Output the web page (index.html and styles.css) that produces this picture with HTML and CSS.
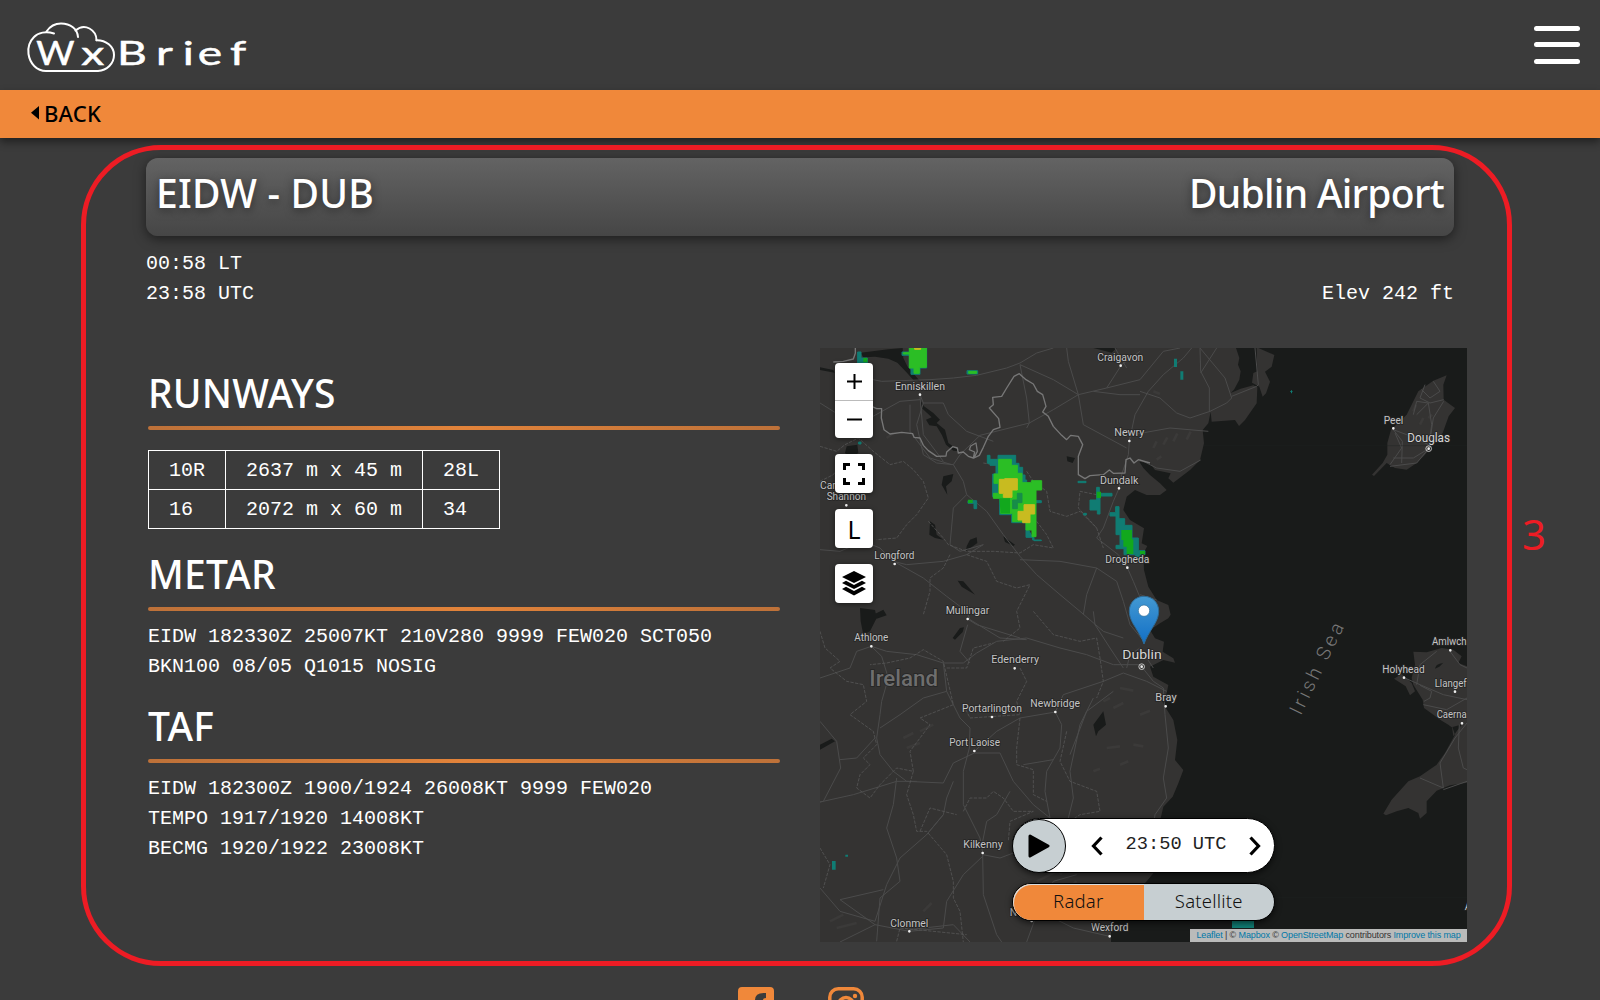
FILE: index.html
```html
<!DOCTYPE html>
<html lang="en">
<head>
<meta charset="utf-8">
<title>WxBrief - EIDW</title>
<link rel="stylesheet" href="styles.css">
</head>
<body>
<header class="topbar">
  <svg class="logo" width="230" height="54" viewBox="0 0 230 54" aria-label="WxBrief">
    <g fill="none" stroke="#fff" stroke-width="2" stroke-linecap="round">
      <path d="M28 11.500C20 9 12 10.500 8 15C3 20 1.800 27 2.500 32C4 42 11 49 20 49H72C81 48.500 88 41.500 88 33C88 24.500 80 18 70.500 18.200"/>
      <path d="M20.500 9.500C24.500 3.500 30 1.500 35 1.500C44.500 1.500 51.500 7 52 15"/>
      <path d="M49.500 8.500C53.500 5 59 4 63.500 6.500C68 9 70.500 13.500 70.500 18.200"/>
    </g>
    <g class="logo-text">
      <g transform="scale(1.120 1)"><text x="9.200" y="43.500">W</text></g>
      <g transform="scale(1.400 1)"><text x="39.500 65 92.800 112 122.600 145.800" y="43.500">xBrief</text></g>
    </g>
  </svg>
  <button class="menu" aria-label="Menu"><span></span><span></span><span></span></button>
</header>
<nav class="backbar"><svg width="8" height="14" viewBox="0 0 8 14"><path d="M8 0V13.500L0 6.800Z"/></svg><a>BACK</a></nav>

<main class="page">
  <section class="airport">
    <h1>EIDW - DUB</h1>
    <h1 class="airport-name">Dublin Airport</h1>
  </section>
  <section class="info mono">
    <div>00:58 LT<br>23:58 UTC</div>
    <div>Elev 242 ft</div>
  </section>
  <div class="columns">
    <div class="reports mono">
      <h2>RUNWAYS</h2>
      <hr>
      <table>
        <tr><td>10R</td><td>2637 m x 45 m</td><td>28L</td></tr>
        <tr><td>16</td><td>2072 m x 60 m</td><td>34</td></tr>
      </table>
      <h2>METAR</h2>
      <hr>
      <p>EIDW 182330Z 25007KT 210V280 9999 FEW020 SCT050<br>BKN100 08/05 Q1015 NOSIG</p>
      <h2>TAF</h2>
      <hr>
      <p>EIDW 182300Z 1900/1924 26008KT 9999 FEW020<br>TEMPO 1917/1920 14008KT<br>BECMG 1920/1922 23008KT</p>
    </div>
    <div class="map">
      <svg class="tiles" width="647" height="594" viewBox="0 0 1941 1782">
        <rect width="1941" height="1782" fill="#343332"/>
        <path class="sea" d="M1315 0L1363 21L1355 56L1335 71L1350 101L1338 136L1328 146L1318 116L1296 104L1300 75L1312 70L1310 0H1248L1258 30L1254 50L1262 70L1258 95L1242 125L1232 135L1262 122L1300 112L1312 118L1310 166L1275 216L1257 234L1245 216L1175 221L1172 191L1165 226L1148 246L1152 286L1140 336L1110 366L1060 404L1045 391L1052 376L1005 366L990 346L958 341L970 360L990 381L1020 406L1040 426L1020 441L980 441L945 426L920 446L910 486L930 516L972 541L965 586L982 594L970 616L972 666L985 716L1010 756L1045 771L1052 800L1045 811L1020 826L990 846L1005 871L1032 881L1028 911L1060 931L1065 944L1030 936L990 956L1000 986L1045 1011L1040 1036L1025 1056L1035 1076L1060 1116L1072 1176L1065 1236L1090 1266L1075 1306L1058 1346L1030 1376L1020 1420L1010 1500L1000 1576L980 1600L900 1690L873 1716V1782H1941V0Z"/>
        <!-- Isle of Man -->
        <path class="land" d="M1880 82L1870 110L1871 155L1905 180L1886 205L1868 255L1815 320L1790 345L1760 365L1725 360L1700 345L1662 384L1656 380L1688 345L1702 320L1702 285L1713 245L1760 200L1795 130L1840 98Z"/>
        <!-- Anglesey and Llyn -->
        <path class="land" d="M1780 911L1820 913L1865 900L1900 905L1925 925L1915 945L1941 955V1125L1895 1138L1885 1130L1865 1118L1812 1080L1808 1055L1780 1010L1775 990L1785 950Z"/>
        <path class="land" d="M1722 992L1745 978L1775 1005L1785 1030L1770 1042L1757 1015Z"/>
        <path class="land" d="M1895 1130L1900 1165L1910 1150L1941 1110V1304L1890 1312L1850 1328L1820 1360L1820 1395L1800 1412L1795 1395L1765 1380L1730 1390L1698 1402L1690 1397L1715 1355L1765 1300L1800 1285L1850 1250L1875 1215L1905 1160Z"/>
        <path class="sea" d="M1845 962C1850 945 1860 948 1870 944L1858 956Z"/>
        <!-- lakes -->
        <path class="sea" d="M122 14L205 4L248 0L250 30L262 55L300 100L282 98L262 76L232 44L205 32L165 26L130 28Z"/>
        <path class="sea" d="M300 155L312 175L340 195L360 215L350 225L375 245L385 285L420 310L400 308L378 290L366 262L350 235L328 232L318 215L335 208L305 180Z"/>
        <path class="sea" d="M80 295L112 290L115 315L90 330L75 315ZM370 385L400 378L395 400L378 415L382 440L365 410ZM330 520L345 530L350 560L370 575L345 570L328 560ZM440 595L450 575L470 568L472 585L438 610ZM413 698L430 700L465 740L425 716ZM398 870L420 840L432 838L428 852L405 875ZM120 780L165 786L170 810L150 850L130 860L122 820ZM160 800L190 785L200 802L170 812ZM0 1190L35 1172L45 1180L0 1205ZM820 1130L850 1090L858 1130L835 1150L828 1165ZM740 325L765 330L758 345L742 340ZM550 565L585 590L580 594L555 582ZM0 58L40 66L44 74L0 66ZM820 0H890L875 14Z"/>
        <path class="hills" d="M850 1060l20-10M880 1080l30-15M860 1200l40-5M900 1250l25-10M940 1190l30 5M960 1100l30-12M820 1270l20-8M900 1020l40 8M250 1170l30-15M300 1150l40-20M260 1200l40-15M310 1690l25-25M30 1720l40-20M50 1740l60-15M650 1600l60-30M720 1580l30-40M700 1660l70-60M1000 300l10-20M1030 290l12-22M1060 280l12-24M1100 275l12-24M1010 335l14-10M1780 190l8-20M1800 230l10-20M1825 210l12-10M1000 130l20 8M200 270l20-15M80 200l16-10"/>
        <g class="roads">
          <path d="M55 75L185 100L330 95L400 90L470 82L560 60L600 45L650 15L700 0M600 50L700 95L775 140L860 120L960 95L1030 10L1080 0M740 0L745 40L775 140L790 230L920 300M775 140L700 185L628 225L620 240M628 225L620 150L600 50M628 225L480 262L420 320L400 350"/>
          <path d="M300 140L310 165L370 165L385 200L440 250L520 280M300 155L240 160L150 210L80 215L0 165M310 165L290 230L310 320L350 345L400 350L430 400L440 440L500 490L550 560L600 625L650 680L720 740L780 790L850 850L910 870"/>
          <path d="M440 440L400 480L390 590L420 610L490 590L440 620L370 640L260 650L220 640L180 600L130 580L60 610L0 605M395 350L330 330L270 250L270 170M300 145L310 260L370 340M230 645L310 690L380 745L440 790L450 815L540 870L620 875"/>
          <path d="M928 279L945 200L985 130L1030 80L1090 30L1115 0M928 279L925 320L905 380L897 421L880 460L850 540L830 570L895 620L922 659L940 700L965 760L975 870M960 130L1020 150L1070 195L1110 210L1170 190L1220 165L1235 150L1215 90L1140 0M1140 0L1142 70L1168 120L1168 190M1235 145L1310 115L1315 110L1305 0M1190 0L1142 75M1165 250L1050 240L928 262M860 120L905 50L960 10M820 130L900 140L960 140M1142 336L1080 370L1010 360L960 335"/>
          <path d="M154 895L200 910L290 920L370 945L430 945L470 915L530 880L620 870L720 900L800 920L880 950L960 950M154 895L110 910L90 960L0 990M443 813L470 830L600 870M443 830L420 910L450 945M370 945L380 1030L420 1110L450 1140L448 1200L430 1270L430 1370L480 1470L488 1515M154 895L185 925L205 990L185 1060L180 1100L170 1170L180 1220L220 1270L260 1300L370 1305L400 1245L463 1215L540 1215L580 1300L640 1370L690 1410"/>
          <path d="M180 1140L240 1100L310 1050L380 1030M60 1235L110 1230L165 1170M0 1120L50 1180L62 1260L10 1360L0 1362M0 1362L100 1340L230 1300L290 1300M230 1290L220 1370L200 1440L230 1530L240 1600L180 1650L170 1780M463 1210L530 1150L600 1110L706 1092L730 1040L850 1000L910 975M706 1092L725 1130L720 1200L680 1270L675 1330L690 1410M610 1250L700 1235M820 1050L780 1130L750 1270L760 1350L740 1430M880 1030L800 1090L750 1220"/>
          <path d="M370 1400L320 1460L240 1530L200 1610L165 1720L60 1690L0 1620M488 1520L490 1640L530 1760L545 1782M488 1525L430 1580L380 1660L370 1740L268 1750L165 1730L60 1655L190 1625M488 1520L540 1530L620 1500M570 1330L530 1400L500 1420L488 1480M400 1300L380 1350L370 1400L320 1460M268 1745L400 1730L450 1782M635 1719L700 1710L760 1740L869 1765M165 1730L60 1782M620 1782L650 1700L700 1600L770 1580"/>
          <path d="M885 0L920 60M972 880L930 830L910 760L890 700L830 660L720 640L600 635M830 660L800 740L790 800M960 950L1000 1000L1030 1020L1035 1100L1045 1200L1030 1290L1040 1350L1005 1400L990 1500M920 960L930 920L960 900L1000 960M910 975L980 1000L1040 1030M820 790L825 830L870 900L910 960M1010 756L960 740"/>
          <path d="M1815 110L1800 150L1830 165L1871 155M1790 200L1825 165L1835 230L1826 302M1871 160L1840 210L1826 302L1790 345L1710 355M1720 245L1760 260L1826 290M1725 255L1745 300L1710 350M1745 345L1747 280L1720 245M1840 100L1860 130L1830 150L1805 125M1720 330L1780 330L1826 302M1825 165L1790 160L1780 200"/>
          <path d="M1752 989L1800 1010L1870 1040L1941 1055M1790 1010L1800 950L1850 910M1800 1012L1835 1030L1830 1050L1812 1060M1810 1070L1880 1085L1941 1050M1941 1125L1905 1170L1860 1245L1870 1320L1800 1290M1870 1325L1941 1300M1918 1130L1915 1200L1930 1260L1941 1265M1890 910L1920 950L1941 960"/>
        </g>
        <g class="county">
          <path d="M0 295L50 310L75 290L115 270L160 310L210 350L250 340L280 365L310 400L325 450L290 500L260 530L230 570L170 575M325 520L370 570L385 590L440 610L520 610L600 615L640 590L700 600L680 560L650 520M0 400L40 380L60 350L95 330M490 345L520 350M620 370L640 400L680 430L690 490L740 505L780 490L830 540M390 620L370 660L330 690L330 730L310 800M440 620L500 640L530 700L590 720L630 710L590 790L600 840L550 880"/>
          <path d="M0 850L15 900L60 940L30 960L80 1000L130 1010L140 1060L90 1100L160 1150L170 1190L130 1230L150 1250L120 1280L110 1320L150 1350L180 1310L230 1260L280 1270L270 1210L330 1130L300 1110L400 1070L370 940L310 905L270 930L200 945L150 950M380 960L440 960L460 900L520 885M600 960L620 1000L590 1060L600 1100L450 1110L430 1070M600 1110L590 1200L590 1250L640 1265L640 1340L680 1360M280 1270L260 1340L280 1400L290 1450L320 1450L380 1520L400 1600L400 1650L420 1690L430 1782M430 1390L450 1350L500 1350L520 1330L550 1350L580 1390L640 1390L570 1420L565 1480M640 790L700 860L780 880L830 870L840 930L850 1000L830 1050M740 1150L720 1240L750 1300L830 1330L840 1390L780 1400L720 1440M0 1500L30 1550L10 1620M300 1450L330 1380L410 1400M830 440L780 430L775 480L830 540L850 600M230 1780L240 1740L440 1760"/>
        </g>
        <path class="border" d="M40 42L70 40L100 33L106 16V0M155 175L170 182L185 182L184 210L192 245L210 258L245 253L278 257L282 268L300 270L310 292L325 308L350 325L378 324L380 312L398 296L412 300L415 315L430 312L445 325L460 330L464 312L448 305L452 294L468 285L472 310L462 330L478 322L490 298L505 265L520 245L540 238L536 212L508 180L520 170L518 148L545 145L560 120L582 85L598 77L618 95L640 108L652 130L668 140L678 175L668 192L685 205L700 235L725 262L740 275L752 262L775 265L788 290L775 325L775 380L795 392L810 383L850 380L868 366L880 376L915 375L918 335L930 330L942 345L955 335L990 345"/>
        <g class="tile-seam"><path d="M1152 293H1941M1300 1648H1941"/></g>
        <!-- radar returns -->
        <g transform="translate(-30 -24)" stroke-width="3" stroke-linejoin="round">
          <path fill="#107c73" stroke="#107c73" d="M532 346H540V358H564V346H617V370H627V382H638V405H645V420H650V560L668 592V600H694V602H672V592H648V548H605V524H569V470H548V402H558V376H540V370H532ZM490 482H500V506H492V490H474V482ZM143 36H153V54H172V69H143ZM276 36H298V24H350V84H330V103H303V84H298V46H276ZM471 92H503V102H471ZM804 424H828V428H804ZM860 442H868V460H906V468H870V522H862V510H840V480H860ZM821 520H829V525H821ZM917 500H927V536H944V556H966V594H985V632H1005V644H988V660H976V644H942V626H918V616H930V584H918V528H900V518H917ZM670 482H694V488H670ZM146 306H153V312H146Z"/>
          <path fill="#2bbe25" stroke="#2bbe25" d="M566 358H604V376H622V400H636V428H664V422H695V450H678V590H666V570H648V545H608V520H572V475H550V460H566V430H552V402H566ZM298 24H349V82H328V100H312V84H298V42H280V38H298ZM476 94H500V100H476Z"/>
          <path fill="#12a81d" d="M568 475H600V520H572ZM940 570H966V598H970V642H950V620H940V600H934V570ZM860 455H873V474H860ZM474 479H488V489H474ZM160 54H172V67H160ZM990 633H1005V643H990Z"/>
          <path fill="#178d49" stroke="#178d49" d="M622 460H636V488H622V506H608V480H622Z"/>
          <path fill="#c8bb20" stroke="#c8bb20" d="M568 418H584V416H622V450H606V472H580V460H568ZM642 494H674V522H660V548H638V540H624V514H642ZM314 24H332V28H314Z"/>
        </g>
        <path fill="#107c73" d="M1062 32h9v25h-9zM1081 70h9v25h-9zM1410 130h8v2h-8zM1413 127h3v9h-3zM36 1539h11v26h-11zM76 1520h8v6h-8zM1236 1715h66v25h-66z"/>
        <g class="places">
          <text x="832" y="38" textLength="138" lengthAdjust="spacingAndGlyphs">Craigavon</text>
          <text x="225" y="127" textLength="150" lengthAdjust="spacingAndGlyphs">Enniskillen</text>
          <text x="883" y="264" textLength="90" lengthAdjust="spacingAndGlyphs">Newry</text>
          <text x="840" y="407" textLength="115" lengthAdjust="spacingAndGlyphs">Dundalk</text>
          <text x="0" y="422">Car</text>
          <text x="20" y="457" textLength="118" lengthAdjust="spacingAndGlyphs">Shannon</text>
          <text x="163" y="633" textLength="120" lengthAdjust="spacingAndGlyphs">Longford</text>
          <text x="856" y="644" textLength="132" lengthAdjust="spacingAndGlyphs">Drogheda</text>
          <text x="377" y="798" textLength="131" lengthAdjust="spacingAndGlyphs">Mullingar</text>
          <text x="103" y="880" textLength="102" lengthAdjust="spacingAndGlyphs">Athlone</text>
          <text x="514" y="946" textLength="143" lengthAdjust="spacingAndGlyphs">Edenderry</text>
          <text x="426" y="1092" textLength="180" lengthAdjust="spacingAndGlyphs">Portarlington</text>
          <text x="631" y="1078" textLength="149" lengthAdjust="spacingAndGlyphs">Newbridge</text>
          <text x="388" y="1195" textLength="152" lengthAdjust="spacingAndGlyphs">Port Laoise</text>
          <text x="430" y="1501" textLength="118" lengthAdjust="spacingAndGlyphs">Kilkenny</text>
          <text x="211" y="1736" textLength="114" lengthAdjust="spacingAndGlyphs">Clonmel</text>
          <text x="813" y="1750" textLength="112" lengthAdjust="spacingAndGlyphs">Wexford</text>
          <text x="569" y="1703">N</text>
          <text x="1006" y="1060" textLength="64" lengthAdjust="spacingAndGlyphs">Bray</text>
          <text x="1836" y="892" textLength="104" lengthAdjust="spacingAndGlyphs">Amlwch</text>
          <text x="1687" y="974" textLength="127" lengthAdjust="spacingAndGlyphs">Holyhead</text>
          <text x="1844" y="1016" textLength="96" lengthAdjust="spacingAndGlyphs">Llangef</text>
          <text x="1850" y="1110" textLength="90" lengthAdjust="spacingAndGlyphs">Caerna</text>
          <text x="1934" y="1686">A</text>
          <text x="1691" y="227" textLength="59" lengthAdjust="spacingAndGlyphs">Peel</text>
          <text class="city" x="1762" y="282" textLength="128" lengthAdjust="spacingAndGlyphs">Douglas</text>
          <text class="city" x="907" y="933" textLength="118" lengthAdjust="spacingAndGlyphs">Dublin</text>
          <text class="country" x="148" y="1014" textLength="206" lengthAdjust="spacingAndGlyphs">Ireland</text>
          <text class="water" transform="translate(1442 1104) rotate(-64)" x="0" y="0" textLength="298">Irish Sea</text>
        </g>
        <path class="dots" d="M902 53h0M300 140h0M928 279h0M897 421h0M79 472h0M224 648h0M922 659h0M443 813h0M154 895h0M584 961h0M516 1107h0M706 1092h0M463 1209h0M488 1515h0M268 1750h0M869 1765h0M965 956h0M1037 1075h0M1891 907h0M1752 989h0M1905 1031h0M1926 1126h0M1720 241h0M1826 302h0M635 1719h0"/>
        <g fill="none" stroke="#ddd" stroke-width="2.500"><circle cx="965" cy="956" r="8.500"/><circle cx="1826" cy="302" r="8.500"/></g>
        <defs><linearGradient id="pin" x1="0" y1="0" x2="0" y2="1"><stop offset="0" stop-color="#4399d2"/><stop offset="1" stop-color="#126fc6"/></linearGradient></defs>
        <path d="M972 745C946 745 928 765 928 789C928 808 936 822 946 838C956 855 966 870 972 888C978 870 988 855 998 838C1008 822 1016 808 1016 789C1016 765 998 745 972 745Z" fill="url(#pin)" stroke="#2e6c97" stroke-width="3"/>
        <circle cx="972" cy="788" r="17" fill="#fff" stroke="#2e6c97" stroke-width="2"/>
      </svg>
      <div class="controls">
        <div class="zoom">
          <button><svg width="15" height="15" viewBox="0 0 15 15"><path d="M7.500 0V15M0 7.500H15" stroke="#000" stroke-width="2"/></svg></button>
          <button><svg width="15" height="15" viewBox="0 0 15 15"><path d="M0 7.500H15" stroke="#000" stroke-width="2"/></svg></button>
        </div>
        <button class="ctl"><svg width="22" height="22" viewBox="0 0 22 22"><path d="M1.500 7V1.500H7M15 1.500H20.500V7M20.500 15V20.500H15M7 20.500H1.500V15" fill="none" stroke="#000" stroke-width="3"/></svg></button>
        <button class="ctl letter">L</button>
        <button class="ctl"><svg width="26" height="25" viewBox="0 0 26 25"><path d="M13 0L25 6L13 12L1 6ZM5 9.800L13 14L21 9.800L25 12L13 18L1 12ZM5 15.800L13 20L21 15.800L25 18L13 24.500L1 18Z"/></svg></button>
      </div>
      <div class="player">
        <div class="timebar">
          <button class="play"><svg width="22" height="24" viewBox="0 0 22 24"><path d="M2 2L20 12L2 22Z" stroke="#000" stroke-width="3" stroke-linejoin="round"/></svg></button>
          <div class="stepper">
            <svg width="12" height="20" viewBox="0 0 12 20"><path d="M10.500 1.500L2.500 10L10.500 18.500" fill="none" stroke="#000" stroke-width="3.200"/></svg>
            <span class="mono">23:50 UTC</span>
            <svg width="12" height="20" viewBox="0 0 12 20"><path d="M1.500 1.500L9.500 10L1.500 18.500" fill="none" stroke="#000" stroke-width="3.200"/></svg>
          </div>
        </div>
        <div class="layers"><button class="active">Radar</button><button>Satellite</button></div>
      </div>
      <div class="credit"><a>Leaflet</a> | © <a>Mapbox</a> © <a>OpenStreetMap</a> contributors <a>Improve this map</a></div>
    </div>
  </div>
</main>
<footer class="social">
  <svg width="36" height="36" viewBox="0 0 36 36"><path fill="#f0883a" d="M4 0H32Q36 0 36 4V32Q36 36 32 36H25V22H30V16H25V13Q25 11 28 11V6Q17 5 17 13V16H13V22H17V36H4Q0 36 0 32V4Q0 0 4 0Z"/></svg>
  <svg width="36" height="36" viewBox="0 0 36 36" fill="none" stroke="#f0883a" stroke-width="3.500"><rect x="1.800" y="1.800" width="32.400" height="32.400" rx="8.500"/><circle cx="18" cy="18" r="7.500"/><circle cx="27" cy="9" r="2.200" fill="#f0883a" stroke="none"/></svg>
</footer>
<div class="outline"></div>
<div class="outline-number">3</div>
</body>
</html>
```
FILE: styles.css
```css
* { box-sizing: border-box; }
html, body { height: 100%; }
body {
  margin: 0;
  height: 1000px;
  overflow: hidden;
  position: relative;
  background: #3b3b3b;
  color: #fff;
  font-family: "Noto Sans", sans-serif;
}
button { border: 0; padding: 0; background: none; font: inherit; color: #000; }
.mono { font-family: "Liberation Mono", monospace; font-size: 20px; line-height: 30px; }

.topbar { height: 90px; display: flex; justify-content: space-between; padding: 22px 20px 0 26px; }
.logo { overflow: visible; }
.logo-text { font-family: "Lato", sans-serif; font-size: 33px; fill: #fff; stroke: #fff; stroke-width: 0.500; }
.menu { width: 46px; height: 38px; margin-top: 4px; display: flex; flex-direction: column; gap: 11px; }
.menu span { width: 46px; height: 5px; border-radius: 3px; background: #fff; }
.menu span:last-child { margin-top: 1px; }

.backbar {
  height: 48px;
  display: flex;
  align-items: center;
  gap: 5px;
  padding: 0 0 2px 31px;
  background: #f0883a;
  box-shadow: 0 4px 8px rgba(0, 0, 0, 0.450);
  color: #000;
  font-size: 22px;
  font-weight: 500;
  letter-spacing: 0.200px;
}

.page { padding: 20px 133px 0 146px; }
.airport {
  width: 1308px;
  height: 78px;
  padding: 0 10px;
  display: flex;
  justify-content: space-between;
  border-radius: 12px;
  background: linear-gradient(#636363, #464646);
  box-shadow: 0 3px 12px rgba(0, 0, 0, 0.500);
}
h1, h2 { margin: 0; font-family: "Noto Sans", sans-serif; font-size: 39px; font-weight: 550; line-height: 50px; letter-spacing: 0.200px; }
h1 { line-height: 69px; text-shadow: 0 2px 10px rgba(0, 0, 0, 0.500); }
.airport-name { letter-spacing: -0.700px; }
.info { width: 1308px; height: 112px; padding: 13px 0 0; display: flex; justify-content: space-between; }
.info div:last-child { padding-top: 30px; }

.columns { display: flex; justify-content: space-between; }
.reports { width: 634px; padding: 20px 0 0 2px; }
.reports h2 { height: 50px; }
.reports hr { height: 4px; margin: 8px 0; border: 0; border-radius: 2px; background: linear-gradient(90deg, #bd7139, #e2833a 50%, #bd7139); }
.reports p { margin: 0 0 19px; padding-top: 3px; }
.reports table { margin: 20px 0 20px; border-collapse: collapse; }
.reports td { height: 39px; padding: 2px 20px 0; border: 1px solid #fff; line-height: 30px; }

.map { position: relative; width: 647px; height: 594px; overflow: hidden; background: #343332; }
.tiles { display: block; }
.sea { fill: #191b1a; }
.land { fill: #343332; }
.roads, .county, .border, .hills, .tile-seam { fill: none; stroke-linejoin: round; }
.roads { stroke: #4b4b4b; stroke-width: 3; }
.county { stroke: #555; stroke-width: 2.500; stroke-dasharray: 10 4; }
.border { stroke: #777; stroke-width: 4; }
.hills { stroke: #3b3a39; stroke-width: 8; }
.tile-seam { stroke: #222423; stroke-width: 2; opacity: 0.600; }
.places { font-family: "Roboto", sans-serif; font-size: 31px; fill: #c4c4c4; stroke: #252525; stroke-width: 5; paint-order: stroke; }
.places .city { font-size: 37px; fill: #d5d5d5; }
.places .country { font-size: 65px; font-weight: 500; fill: #6e6e6e; }
.places .water { font-size: 58px; font-weight: 300; fill: #777; stroke: none; }
.dots { stroke: #eee; stroke-width: 8; stroke-linecap: round; }

.controls { position: absolute; left: 15px; top: 15px; display: flex; flex-direction: column; gap: 16px; }
.controls button { width: 38px; display: flex; align-items: center; justify-content: center; background: #fff; }
.zoom { border-radius: 4px; overflow: hidden; box-shadow: 0 1px 5px rgba(0, 0, 0, 0.500); }
.zoom button { height: 37px; }
.zoom button:first-child { height: 38px; border-bottom: 1px solid #bbb; }
.ctl { height: 39px; border-radius: 4px; box-shadow: 0 1px 5px rgba(0, 0, 0, 0.500); }
.letter { font-size: 25px; }

.player { position: absolute; left: 192px; top: 470px; width: 263px; display: flex; flex-direction: column; gap: 10px; }
.timebar {
  height: 55px;
  display: flex;
  align-items: center;
  padding-right: 13px;
  border: 1px solid #000;
  border-radius: 28px;
  background: #fff;
  box-shadow: 0 2px 6px rgba(0, 0, 0, 0.600);
  color: #222;
}
.timebar .mono { font-size: 18.700px; padding-bottom: 3px; }
.stepper { flex: 1; display: flex; align-items: center; justify-content: space-between; padding-left: 25px; }
.play { width: 54px; height: 54px; margin: -1px 0 -1px -1px; display: flex; align-items: center; justify-content: center; border: 1px solid #000; border-radius: 50%; background: #c7cfd2; }
.layers {
  height: 38px;
  display: grid;
  grid-template-columns: 1fr 1fr;
  border: 1px solid #000;
  border-radius: 19px;
  overflow: hidden;
  background: #c7cfd2;
  box-shadow: 0 2px 6px rgba(0, 0, 0, 0.600);
}
.layers button { font-size: 18.500px; font-weight: 350; color: #111; line-height: 30px; padding-bottom: 3px; letter-spacing: 0.200px; }
.layers .active { background: #f0883a; box-shadow: inset 1px 1px #d8dcde; border-radius: 18px 0 0 18px; }
.credit {
  position: absolute;
  right: 0;
  bottom: 0;
  width: 277px;
  height: 13px;
  background: rgba(255, 255, 255, 0.700);
  color: #333;
  font: 9px/12px "Liberation Sans", sans-serif;
  letter-spacing: -0.120px;
  text-align: center;
  white-space: nowrap;
}
.credit a { color: #0078a8; }

.social { display: flex; justify-content: center; gap: 54px; padding: 45px 0 0; margin-left: 1px; }
.outline { position: absolute; left: 81px; top: 145px; width: 1431px; height: 821px; border: 5px solid #ed1c24; border-radius: 80px; pointer-events: none; }
.outline-number { position: absolute; left: 1522px; top: 507px; color: #ed1c24; font: 42px/54px "Noto Sans", sans-serif; }
```
